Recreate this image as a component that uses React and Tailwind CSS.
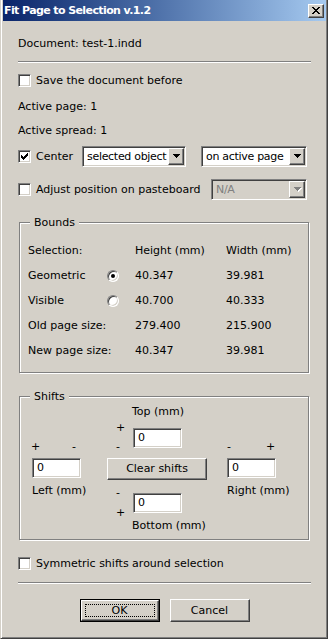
import React from "react";

const FONT = "font-['DejaVu_Sans',sans-serif] text-[11px] leading-[14px]";
const SUNKEN =
  "border border-t-[#808080] border-l-[#808080] border-r-white border-b-white shadow-[inset_1px_1px_0_#404040,inset_-1px_-1px_0_#d4d0c8]";
const RAISED =
  "border border-t-white border-l-white border-r-[#404040] border-b-[#404040] shadow-[inset_-1px_-1px_0_#808080]";
const ETCHED =
  "border border-[#808080] shadow-[inset_1px_1px_0_white,1px_1px_0_white]";

function Check({ checked }) {
  return (
    <span className={`${SUNKEN} w-[13px] h-[13px] bg-white flex items-center justify-center shrink-0`}>
      {checked && (
        <svg width="7" height="7" viewBox="0 0 7 7" shapeRendering="crispEdges">
          <path
            d="M0 2h1v3h-1z M1 3h1v3h-1z M2 4h1v3h-1z M3 3h1v3h-1z M4 2h1v3h-1z M5 1h1v3h-1z M6 0h1v3h-1z"
            fill="#000"
          />
        </svg>
      )}
    </span>
  );
}

function Radio({ checked }) {
  return (
    <span className="w-[12px] h-[12px] rounded-full bg-white border border-t-[#808080] border-l-[#808080] border-r-white border-b-white shadow-[inset_1px_1px_0_#404040,inset_-1px_-1px_0_#d4d0c8] flex items-center justify-center">
      {checked && <span className="w-[4px] h-[4px] rounded-full bg-black" />}
    </span>
  );
}

function Arrow({ disabled }) {
  const d = "M0 0h7v1h-1v1h-1v1h-1v1h-1v-1h-1v-1h-1v-1h-1z";
  return (
    <svg width="8" height="5" viewBox="0 0 8 5" shapeRendering="crispEdges">
      {disabled && <path d={d} fill="#fff" transform="translate(1 1)" />}
      <path d={d} fill={disabled ? "#808080" : "#000"} />
    </svg>
  );
}

function Combo({ value, width, disabled }) {
  return (
    <div className={`${SUNKEN} ${width} h-[21px] p-[1px] flex shrink-0 ${disabled ? "bg-[#d4d0c8]" : "bg-white"}`}>
      <div className={["flex-1 pl-[3px] flex items-center whitespace-nowrap overflow-hidden tracking-[-0.3px]", disabled ? "text-[#808080]" : ""].join(" ")}>
        {value}
      </div>
      <div className={`${RAISED} bg-[#d4d0c8] w-[16px] h-[17px] flex items-center justify-center shrink-0 pl-[1px]`}>
        <Arrow disabled={disabled} />
      </div>
    </div>
  );
}

function Field({ className = "" }) {
  return (
    <div className={`${SUNKEN} ${className} w-[49px] h-[20px] bg-white pl-[4px] flex items-center`}>0</div>
  );
}

function Separator({ className = "" }) {
  return <div className={`${className} h-[2px] border-t border-t-[#808080] border-b border-b-white`} />;
}

export default function App() {
  return (
    <div className={`${FONT} w-[328px] h-[639px] bg-[#d4d0c8] text-black border-l border-r border-b border-l-[#d4d0c8] border-r-[#404040] border-b-[#404040] shadow-[inset_1px_0_0_white,inset_-1px_-1px_0_#808080] pl-[2px] pr-[1px] flex flex-col overflow-hidden`}>
      <div className="h-[21px] shrink-0 flex items-center justify-between bg-linear-to-r from-[#0a246a] to-[#a6caf0] pl-[1px] pr-[2px]">
        <span className="text-white font-bold tracking-[-0.6px]">Fit Page to Selection v.1.2</span>
        <div className={`${RAISED} bg-[#d4d0c8] w-[16px] h-[14px] flex items-center justify-center`}>
          <svg width="8" height="7" viewBox="0 0 8 7" shapeRendering="crispEdges">
            <path
              d="M0 0h2v1h-2z M6 0h2v1h-2z M1 1h2v1h-2z M5 1h2v1h-2z M2 2h4v1h-4z M3 3h2v1h-2z M2 4h4v1h-4z M1 5h2v1h-2z M5 5h2v1h-2z M0 6h2v1h-2z M6 6h2v1h-2z"
              fill="#000"
            />
          </svg>
        </div>
      </div>

      <div className="px-[15px] flex flex-col">
        <div className="mt-[16px] h-[14px]">Document: test-1.indd</div>
        <Separator className="mt-[10px]" />

        <div className="mt-[11px] h-[13px] flex items-center gap-[5px]">
          <Check />
          <span>Save the document before</span>
        </div>

        <div className="mt-[13px] h-[14px]">Active page: 1</div>
        <div className="mt-[10px] h-[14px]">Active spread: 1</div>

        <div className="mt-[8px] h-[21px] flex items-center">
          <Check checked />
          <span className="ml-[5px] w-[46px]">Center</span>
          <Combo value="selected object" width="w-[104px]" />
          <span className="w-[15px]" />
          <Combo value="on active page" width="w-[106px]" />
        </div>

        <div className="mt-[12px] h-[21px] flex items-center">
          <Check />
          <span className="ml-[5px] w-[175px] whitespace-nowrap">Adjust position on pasteboard</span>
          <Combo value="N/A" width="w-[96px]" disabled />
        </div>

        <fieldset className={`${ETCHED} mt-[16px] ml-[1px] w-[290px] pl-[8px] pt-[9px] pb-[9px]`}>
          <legend className="ml-[2px] px-[4px] leading-[13px] bg-[#d4d0c8]">Bounds</legend>
          <div className="grid grid-cols-[79px_28px_91px_1fr] auto-rows-[25px] items-center whitespace-nowrap">
            <span>Selection:</span>
            <span />
            <span>Height (mm)</span>
            <span>Width (mm)</span>

            <span>Geometric</span>
            <Radio checked />
            <span>40.347</span>
            <span>39.981</span>

            <span>Visible</span>
            <Radio />
            <span>40.700</span>
            <span>40.333</span>

            <span>Old page size:</span>
            <span />
            <span>279.400</span>
            <span>215.900</span>

            <span>New page size:</span>
            <span />
            <span>40.347</span>
            <span>39.981</span>
          </div>
        </fieldset>

        <fieldset className={`${ETCHED} mt-[17px] ml-[1px] w-[290px] pl-[12px] pt-[2px] pb-[6px]`}>
          <legend className="-ml-[2px] px-[4px] leading-[13px] bg-[#d4d0c8]">Shifts</legend>
          <div className="flex whitespace-nowrap">
            <div className="w-[75px] flex flex-col">
              <div className="mt-[35px] h-[14px] flex -ml-[1px]">
                <span className="w-[41px]">+</span>
                <span>-</span>
              </div>
              <Field className="mt-[4px]" />
              <div className="mt-[6px] h-[14px]">Left (mm)</div>
            </div>

            <div className="w-[100px] flex flex-col">
              <div className="h-[14px] pl-[25px]">Top (mm)</div>
              <div className="flex pl-[9px]">
                <div className="w-[17px] flex flex-col">
                  <span className="mt-[2px] h-[14px]">+</span>
                  <span className="mt-[5px] h-[14px]">-</span>
                </div>
                <Field className="mt-[9px]" />
              </div>
              <button className={`${RAISED} mt-[4px] h-[22px] w-[100px] bg-[#d4d0c8] flex items-center justify-center`}>
                Clear shifts
              </button>
              <div className="flex pl-[9px]">
                <div className="w-[17px] flex flex-col">
                  <span className="mt-[6px] h-[14px]">-</span>
                  <span className="mt-[6px] h-[14px]">+</span>
                </div>
                <Field className="mt-[13px]" />
              </div>
              <div className="-mt-[1px] h-[14px] pl-[25px]">Bottom (mm)</div>
            </div>

            <div className="ml-[20px] flex flex-col">
              <div className="mt-[35px] h-[14px] flex">
                <span className="w-[39px]">-</span>
                <span>+</span>
              </div>
              <Field className="mt-[4px]" />
              <div className="mt-[6px] h-[14px]">Right (mm)</div>
            </div>
          </div>
        </fieldset>

        <div className="mt-[17px] h-[13px] flex items-center gap-[5px]">
          <Check />
          <span>Symmetric shifts around selection</span>
        </div>

        <Separator className="mt-[12px]" />

        <div className="mt-[15px] flex justify-center gap-[10px]">
          <button className="w-[80px] h-[23px] border border-black bg-[#d4d0c8]">
            <div className={`${RAISED} w-full h-full p-[3px]`}>
              <div className="w-full h-full border border-dotted border-black flex items-center justify-center">OK</div>
            </div>
          </button>
          <button className={`${RAISED} w-[80px] h-[23px] bg-[#d4d0c8] flex items-center justify-center`}>Cancel</button>
        </div>
      </div>
    </div>
  );
}
